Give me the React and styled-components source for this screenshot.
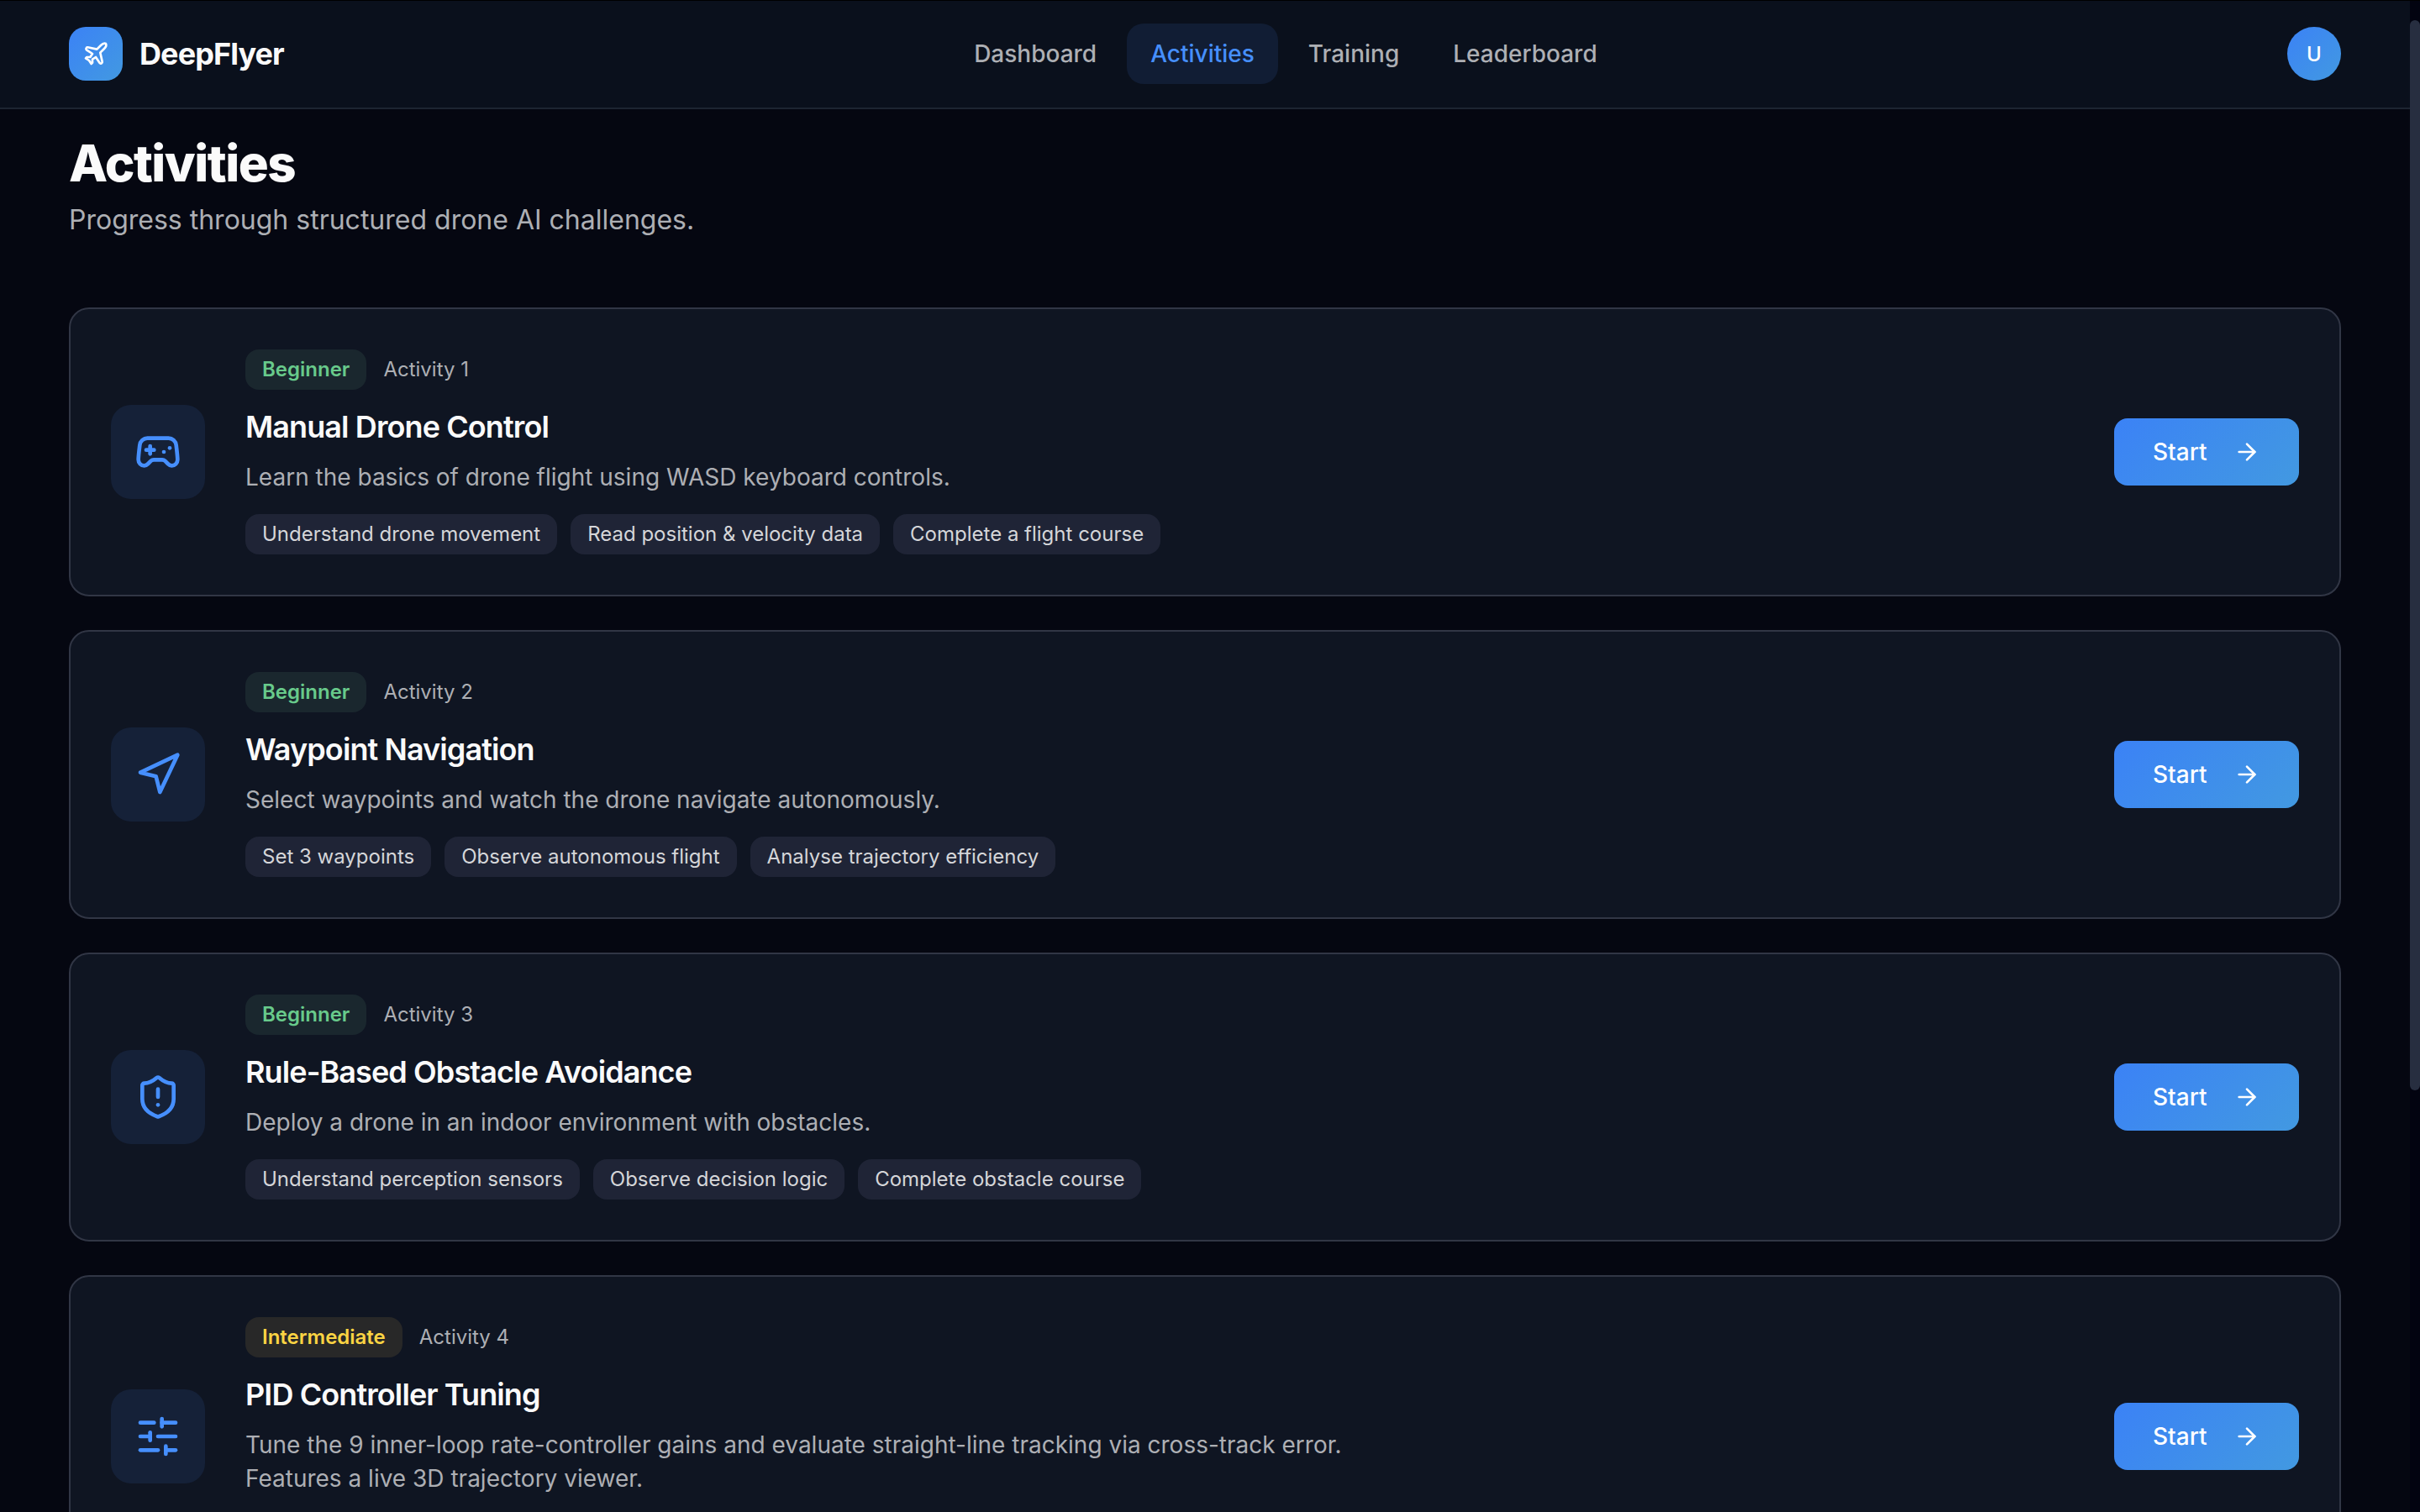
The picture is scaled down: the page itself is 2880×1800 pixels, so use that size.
import React from 'react';
import styled, { createGlobalStyle } from 'styled-components';
import { ArrowRight, Gamepad2, Navigation, Plane, ShieldAlert, SlidersHorizontal } from 'lucide-react';

const navItems = ['Dashboard', 'Activities', 'Training', 'Leaderboard'];

const activities = [
    {
        id: 1,
        level: 'Beginner',
        title: 'Manual Drone Control',
        description: 'Learn the basics of drone flight using WASD keyboard controls.',
        goals: ['Understand drone movement', 'Read position & velocity data', 'Complete a flight course'],
        icon: Gamepad2,
    },
    {
        id: 2,
        level: 'Beginner',
        title: 'Waypoint Navigation',
        description: 'Select waypoints and watch the drone navigate autonomously.',
        goals: ['Set 3 waypoints', 'Observe autonomous flight', 'Analyse trajectory efficiency'],
        icon: Navigation,
    },
    {
        id: 3,
        level: 'Beginner',
        title: 'Rule-Based Obstacle Avoidance',
        description: 'Deploy a drone in an indoor environment with obstacles.',
        goals: ['Understand perception sensors', 'Observe decision logic', 'Complete obstacle course'],
        icon: ShieldAlert,
    },
    {
        id: 4,
        level: 'Intermediate',
        title: 'PID Controller Tuning',
        description: 'Tune the 9 inner-loop rate-controller gains and evaluate straight-line tracking via cross-track error. Features a live 3D trajectory viewer.',
        goals: [],
        icon: SlidersHorizontal,
    },
];

const levelColors = {
    Beginner: { text: '#68ca8b', background: '#1a272e' },
    Intermediate: { text: '#fad443', background: '#282828' },
};

const App = () => {
    return (
        <>
            <GlobalStyle />
            <Screen>
                <Page>
                    <Header>
                        <Brand>
                            <Logo><Plane size={32} /></Logo>
                            <BrandName>DeepFlyer</BrandName>
                        </Brand>
                        <Nav>
                            {navItems.map((item) => (
                                <NavLink key={item} $active={item === 'Activities'}>{item}</NavLink>
                            ))}
                        </Nav>
                        <Avatar>U</Avatar>
                    </Header>
                    <Main>
                        <PageTitle>Activities</PageTitle>
                        <Subtitle>Progress through structured drone AI challenges.</Subtitle>
                        <List>
                            {activities.map((activity) => (
                                <ActivityCard key={activity.id} activity={activity} />
                            ))}
                        </List>
                    </Main>
                </Page>
                <ScrollTrack>
                    <ScrollThumb />
                </ScrollTrack>
            </Screen>
        </>
    );
};

const ActivityCard = ({ activity }) => {
    const Icon = activity.icon;

    return (
        <Card>
            <IconTile><Icon size={56} /></IconTile>
            <Content>
                <Meta>
                    <Badge $colors={levelColors[activity.level]}>{activity.level}</Badge>
                    <Order>Activity {activity.id}</Order>
                </Meta>
                <CardTitle>{activity.title}</CardTitle>
                <Description>{activity.description}</Description>
                <Goals>
                    {activity.goals.map((goal) => (
                        <Goal key={goal}>{goal}</Goal>
                    ))}
                </Goals>
            </Content>
            <StartButton>
                Start
                <ArrowRight size={32} />
            </StartButton>
        </Card>
    );
};

const GlobalStyle = createGlobalStyle`
  * {
    box-sizing: border-box;
  }

  body {
    margin: 0;
    background: #050711;
    color: #fafafa;
    font-family: Inter, sans-serif;
    overflow: hidden;
    -webkit-font-smoothing: antialiased;
  }

  svg {
    display: block;
    flex-shrink: 0;
  }
`;

const Screen = styled.div`
  display: flex;
  height: 1800px;
  overflow: hidden;
`;

const Page = styled.div`
  flex: 1;
  min-width: 0;
`;

const Header = styled.header`
  display: flex;
  align-items: center;
  justify-content: space-between;
  height: 130px;
  padding: 0 82px;
  background: #0a101c;
  border-bottom: 2px solid #1d2531;
  box-shadow: inset 0 1px 0 #000;
`;

const Brand = styled.div`
  display: flex;
  align-items: center;
  gap: 20px;
`;

const Logo = styled.div`
  display: grid;
  place-items: center;
  width: 64px;
  height: 64px;
  border-radius: 20px;
  background: linear-gradient(135deg, #3b82f6, #4299e1);
  color: #fff;
`;

const BrandName = styled.span`
  font-size: 36px;
  font-weight: 700;
  letter-spacing: -0.025em;
`;

const Nav = styled.nav`
  display: flex;
  gap: 8px;
`;

const NavLink = styled.a`
  height: 72px;
  padding: 0 28px;
  border-radius: 20px;
  background: ${({ $active }) => ($active ? '#111d34' : 'transparent')};
  color: ${({ $active }) => ($active ? '#468ffd' : '#adafb4')};
  font-size: 28px;
  font-weight: 500;
  line-height: 72px;
`;

const Avatar = styled.div`
  display: grid;
  place-items: center;
  width: 64px;
  height: 64px;
  border-radius: 50%;
  background: linear-gradient(135deg, #3b82f6, #4299e1);
  color: #fff;
  font-size: 24px;
  font-weight: 500;
`;

const Main = styled.main`
  padding: 28px 82px 0;
`;

const PageTitle = styled.h1`
  margin: 0;
  font-size: 60px;
  font-weight: 800;
  line-height: 72px;
  letter-spacing: -0.025em;
`;

const Subtitle = styled.p`
  margin: 8px 0 80px;
  color: #adafb4;
  font-size: 32px;
  line-height: 48px;
`;

const List = styled.div`
  display: flex;
  flex-direction: column;
  gap: 40px;
`;

const Card = styled.article`
  display: flex;
  align-items: center;
  gap: 48px;
  padding: 48px;
  border: 2px solid #313645;
  border-radius: 24px;
  background: #0f1522;
`;

const IconTile = styled.div`
  display: grid;
  place-items: center;
  flex-shrink: 0;
  width: 112px;
  height: 112px;
  border-radius: 24px;
  background: #152138;
  color: #468ffd;
`;

const Content = styled.div`
  flex: 1;
  min-width: 0;
`;

const Meta = styled.div`
  display: flex;
  align-items: center;
  gap: 20px;
`;

const Badge = styled.span`
  height: 48px;
  padding: 0 20px;
  border-radius: 16px;
  background: ${({ $colors }) => $colors.background};
  color: ${({ $colors }) => $colors.text};
  font-size: 24px;
  font-weight: 600;
  line-height: 48px;
`;

const Order = styled.span`
  color: #adafb4;
  font-size: 24px;
  line-height: 48px;
`;

const CardTitle = styled.h2`
  margin: 16px 0 12px;
  font-size: 36px;
  font-weight: 600;
  line-height: 56px;
  letter-spacing: -0.025em;
`;

const Description = styled.p`
  max-width: 1400px;
  margin: 0 0 24px;
  color: #adafb4;
  font-size: 28px;
  line-height: 40px;
`;

const Goals = styled.div`
  display: flex;
  gap: 16px;
  min-height: 48px;
`;

const Goal = styled.span`
  padding: 0 20px;
  border-radius: 16px;
  background: #1f2436;
  color: #d5d6d9;
  font-size: 24px;
  line-height: 48px;
`;

const StartButton = styled.button`
  display: flex;
  align-items: center;
  justify-content: space-between;
  flex-shrink: 0;
  width: 220px;
  height: 80px;
  padding: 0 46px;
  border: 0;
  border-radius: 16px;
  background: linear-gradient(135deg, #3b82f6, #4299e1);
  color: #fff;
  font: 500 28px Inter, sans-serif;
`;

const ScrollTrack = styled.div`
  width: 12px;
  padding-top: 24px;
  background: #020310;
  box-shadow: inset 0 1px 0 #000;
`;

const ScrollThumb = styled.div`
  height: 1274px;
  border-radius: 6px;
  background: #272e40;
`;

export default App;
